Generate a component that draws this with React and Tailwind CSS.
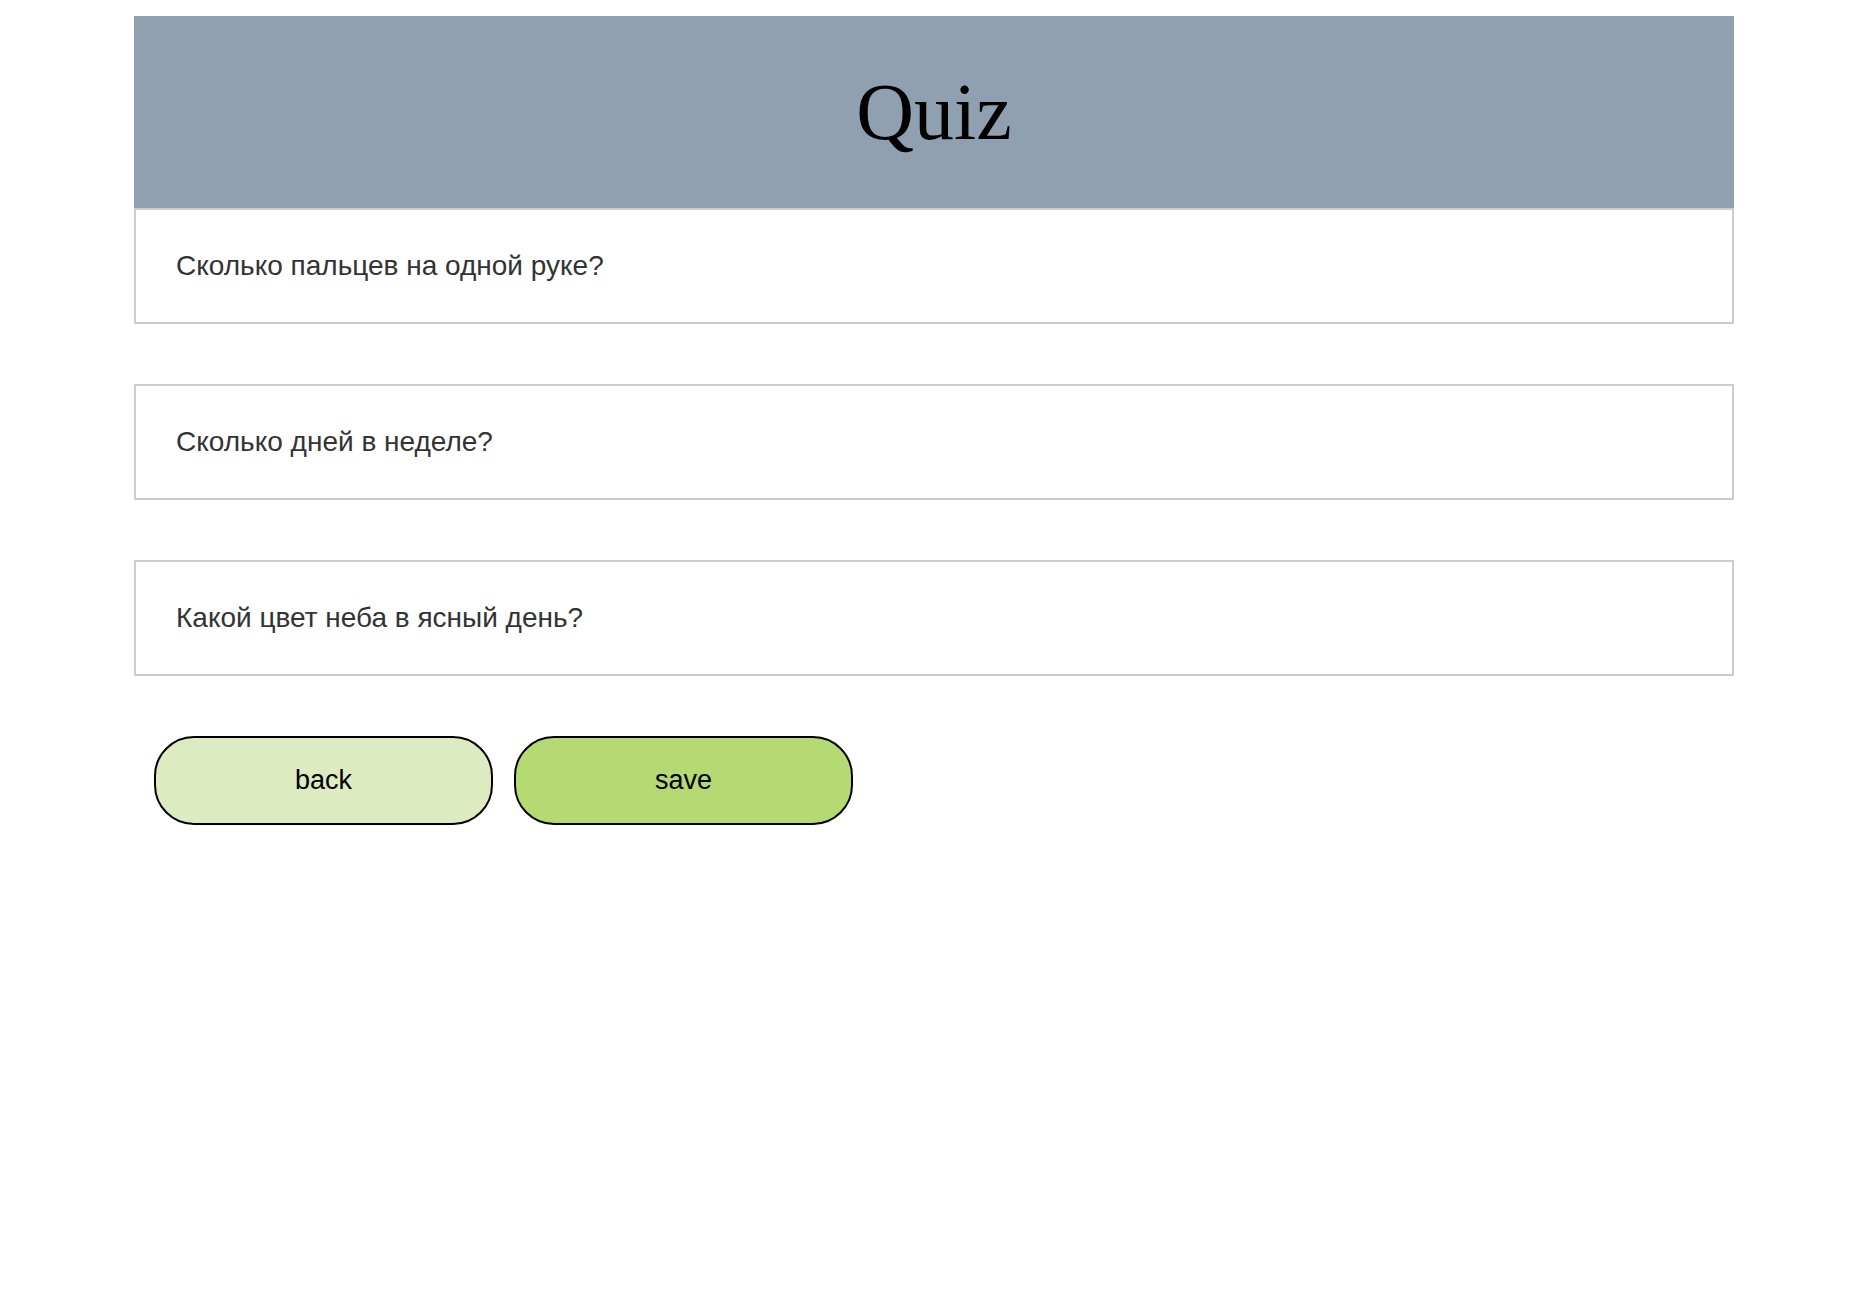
import React from "react";

const QUESTIONS = [
  "Сколько пальцев на одной руке?",
  "Сколько дней в неделе?",
  "Какой цвет неба в ясный день?",
];

function App() {
  return (
    <div className="min-h-screen bg-white pt-4">
      <div className="ml-[134px] w-[1600px]">
        <div className="h-[192px] bg-[#8fa0b0] flex items-center justify-center">
          <h1 className="text-[80px] leading-none text-black font-['Liberation_Serif',serif]">
            Quiz
          </h1>
        </div>

        {QUESTIONS.map((q, i) => (
          <div
            key={i}
            className={`h-[116px] border-2 border-[#cccccc] bg-white flex items-center px-10 ${i > 0 ? "mt-[60px]" : ""}`}
          >
            <span className="text-[28px] text-[#333333] font-['Liberation_Sans',Arial,sans-serif]">
              {q}
            </span>
          </div>
        ))}

        <div className="flex gap-[21px] ml-5 mt-[60px]">
          <button
            type="button"
            className="w-[339px] h-[89px] rounded-[40px] border-2 border-black bg-[#ddebc0] text-[27px] text-black font-['Liberation_Sans',Arial,sans-serif]"
          >
            back
          </button>
          <button
            type="button"
            className="w-[339px] h-[89px] rounded-[40px] border-2 border-black bg-[#b5d973] text-[27px] text-black font-['Liberation_Sans',Arial,sans-serif]"
          >
            save
          </button>
        </div>
      </div>
    </div>
  );
}

export default App;
